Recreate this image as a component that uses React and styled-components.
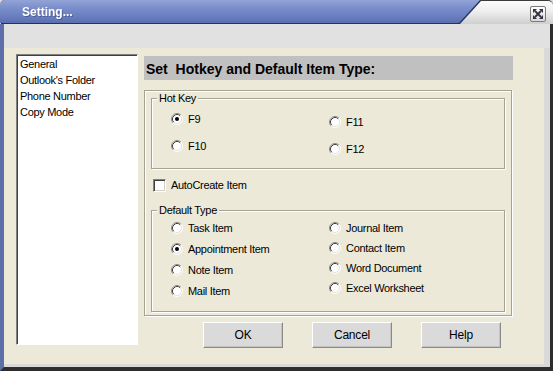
import React from 'react';
import styled, { createGlobalStyle } from 'styled-components';

const GlobalStyle = createGlobalStyle`
  html, body {
    margin: 0;
    padding: 0;
    background: #ffffff;
  }
  body {
    font-family: "Liberation Sans", Arial, sans-serif;
    font-size: 11px;
    color: #000;
  }
`;

const Window = styled.div`
  width: 553px;
  height: 371px;
  display: flex;
  flex-direction: column;
  overflow: hidden;
  background: #dcdcdc;
`;

const TitleBar = styled.div`
  height: 24px;
  flex: none;
  display: flex;
  align-items: center;
  justify-content: space-between;
  background: linear-gradient(#fbfbfb 0%, #eeeeee 45%, #cfcfcf 100%);
  border-top: 1px solid #3a3a3a;
  box-sizing: border-box;
  border-radius: 5px 5px 0 0;
`;

const TabEdge = styled.div`
  align-self: stretch;
  margin-top: -1px;
  filter: drop-shadow(1px 1px 0 #26325e);
`;

const TitleTab = styled.div`
  width: 480px;
  height: 23px;
  box-sizing: border-box;
  padding: 1px 0 0 22px;
  display: flex;
  align-items: center;
  clip-path: polygon(0 0, 480px 0, 459px 100%, 0 100%);
  background: linear-gradient(#93a3d6 0%, #7a8ecb 35%, #6a7ec0 70%, #5b6eb0 100%);
  border-radius: 5px 0 0 0;
  color: #ffffff;
  font-weight: bold;
  font-size: 12px;
  text-shadow: 1px 1px 0 rgba(40, 52, 100, 0.45);
`;

const CloseButton = styled.div`
  width: 16px;
  height: 16px;
  margin-right: 7px;
  margin-top: 2px;
  box-sizing: border-box;
  border: 1px solid #7b7b7b;
  border-radius: 2px;
  background: linear-gradient(#ffffff, #d9d9d9);
  display: flex;
  align-items: center;
  justify-content: center;
`;

const Frame = styled.div`
  flex: 1;
  display: flex;
  flex-direction: column;
  border-left: 4px solid #5d6ea8;
  border-right: 3px solid #2e2e2e;
  border-bottom: 4px solid #2e2e2e;
  background: #d9d9d9;
`;

const TopStrip = styled.div`
  height: 24px;
  flex: none;
  background: #e1e1e1;
`;

const Body = styled.div`
  flex: 1;
  margin: 0 6px 3px 0;
  padding: 6px 0 0 12px;
  display: flex;
  gap: 6px;
  align-items: flex-start;
  background: #ece9d8;
`;

const ListBox = styled.ul`
  width: 122px;
  height: 291px;
  box-sizing: border-box;
  margin: 0;
  padding: 1px 0 0 3px;
  list-style: none;
  background: #ffffff;
  border: 1px solid;
  border-color: #808080 #ffffff #ffffff #808080;
  box-shadow: inset 1px 1px 0 #404040;
`;

const ListItem = styled.li`
  height: 16px;
  line-height: 16px;
  letter-spacing: -0.3px;
  white-space: nowrap;
`;

const Main = styled.div`
  width: 369px;
  display: flex;
  flex-direction: column;
`;

const Heading = styled.div`
  margin-top: 2px;
  height: 24px;
  box-sizing: border-box;
  padding: 1px 0 0 2px;
  display: flex;
  align-items: center;
  background: #c0c0c0;
  font-size: 14px;
  font-weight: bold;
  white-space: pre;
`;

const OuterGroup = styled.div`
  margin-top: 10px;
  width: 368px;
  height: 226px;
  box-sizing: border-box;
  padding: 1px 0 0 6px;
  border: 1px solid #a5a294;
  box-shadow: inset 1px 1px 0 #ffffff, 1px 1px 0 #ffffff;
`;

const GroupBox = styled.fieldset`
  width: 354px;
  box-sizing: border-box;
  margin: ${(p) => p.$top}px 0 0 0;
  padding: ${(p) => p.$pad};
  min-inline-size: 0;
  border: 1px solid #a5a294;
  box-shadow: inset 1px 1px 0 #ffffff, 1px 1px 0 #ffffff;
`;

const Legend = styled.legend`
  margin-left: -14px;
  padding: 0 2px;
  height: 12px;
  line-height: 12px;
  letter-spacing: -0.3px;
  background: #ece9d8;
`;

const Columns = styled.div`
  display: grid;
  grid-template-columns: 158px 1fr;
`;

const Column = styled.div`
  display: flex;
  flex-direction: column;
  gap: ${(p) => p.$gap}px;
  margin-top: ${(p) => p.$shift || 0}px;
`;

const Option = styled.label`
  height: 14px;
  display: flex;
  align-items: center;
  gap: 5px;
  letter-spacing: -0.3px;
  white-space: nowrap;
`;

const CheckRow = styled.label`
  margin: 9px 0 0 2px;
  height: 14px;
  display: flex;
  align-items: center;
  gap: 5px;
  letter-spacing: -0.3px;
`;

const CheckBox = styled.span`
  width: 13px;
  height: 13px;
  box-sizing: border-box;
  background: #ffffff;
  border: 1px solid;
  border-color: #808080 #ffffff #ffffff #808080;
  box-shadow: inset 1px 1px 0 #404040, inset -1px -1px 0 #d4d0c8;
`;

const ButtonRow = styled.div`
  margin-top: 6px;
  padding-right: 12px;
  display: flex;
  justify-content: flex-end;
  gap: 29px;
`;

const Button = styled.div`
  width: 80px;
  height: 26px;
  box-sizing: border-box;
  display: flex;
  align-items: center;
  justify-content: center;
  background: #dadada;
  border: 1px solid;
  border-color: #ffffff #8a8a8a #8a8a8a #ffffff;
  box-shadow: inset -1px -1px 0 #c4c4c4;
  font-size: 12px;
  letter-spacing: -0.2px;
`;

const Radio = ({ checked }) => (
  <svg width="12" height="12" viewBox="0 0 12 12">
    <circle cx="6" cy="6" r="5" fill="#ffffff" />
    <path d="M2.11 9.89 A5.5 5.5 0 0 1 9.89 2.11" fill="none" stroke="#8c8c8c" />
    <path d="M2.82 9.18 A4.5 4.5 0 0 1 9.18 2.82" fill="none" stroke="#404040" />
    <path d="M9.89 2.11 A5.5 5.5 0 0 1 2.11 9.89" fill="none" stroke="#ffffff" />
    <path d="M9.18 2.82 A4.5 4.5 0 0 1 2.82 9.18" fill="none" stroke="#e4e2d8" />
    {checked && <circle cx="6" cy="6" r="2" fill="#000000" />}
  </svg>
);

const CloseIcon = () => (
  <svg width="12" height="12" viewBox="0 0 12 12">
    <path d="M3 3 L9 9 M9 3 L3 9" stroke="#2f3340" strokeWidth="1.8" />
    <path d="M1 1 H5 L1 5 Z M11 1 V5 L7 1 Z M1 11 V7 L5 11 Z M11 11 H7 L11 7 Z" fill="#2f3340" />
  </svg>
);

const RadioOption = ({ label, checked }) => (
  <Option>
    <Radio checked={checked} />
    <span>{label}</span>
  </Option>
);

const menu = ['General', "Outlook's Folder", 'Phone Number', 'Copy Mode'];

const App = () => (
  <Window>
    <GlobalStyle />
    <TitleBar>
      <TabEdge>
        <TitleTab>Setting...</TitleTab>
      </TabEdge>
      <CloseButton>
        <CloseIcon />
      </CloseButton>
    </TitleBar>
    <Frame>
      <TopStrip />
      <Body>
        <ListBox>
          {menu.map((m) => (
            <ListItem key={m}>{m}</ListItem>
          ))}
        </ListBox>
        <Main>
          <Heading>Set  Hotkey and Default Item Type:</Heading>
          <OuterGroup>
            <GroupBox $top={0} $pad="8px 0 12px 19px">
              <Legend>Hot Key</Legend>
              <Columns>
                <Column $gap={13}>
                  <RadioOption label="F9" checked />
                  <RadioOption label="F10" />
                </Column>
                <Column $gap={13} $shift={3}>
                  <RadioOption label="F11" />
                  <RadioOption label="F12" />
                </Column>
              </Columns>
            </GroupBox>
            <CheckRow>
              <CheckBox />
              <span>AutoCreate Item</span>
            </CheckRow>
            <GroupBox $top={12} $pad="5px 0 13px 19px">
              <Legend>Default Type</Legend>
              <Columns>
                <Column $gap={7}>
                  <RadioOption label="Task Item" />
                  <RadioOption label="Appointment Item" checked />
                  <RadioOption label="Note Item" />
                  <RadioOption label="Mail Item" />
                </Column>
                <Column $gap={6}>
                  <RadioOption label="Journal Item" />
                  <RadioOption label="Contact Item" />
                  <RadioOption label="Word Document" />
                  <RadioOption label="Excel Worksheet" />
                </Column>
              </Columns>
            </GroupBox>
          </OuterGroup>
          <ButtonRow>
            <Button>OK</Button>
            <Button>Cancel</Button>
            <Button>Help</Button>
          </ButtonRow>
        </Main>
      </Body>
    </Frame>
  </Window>
);

export default App;
